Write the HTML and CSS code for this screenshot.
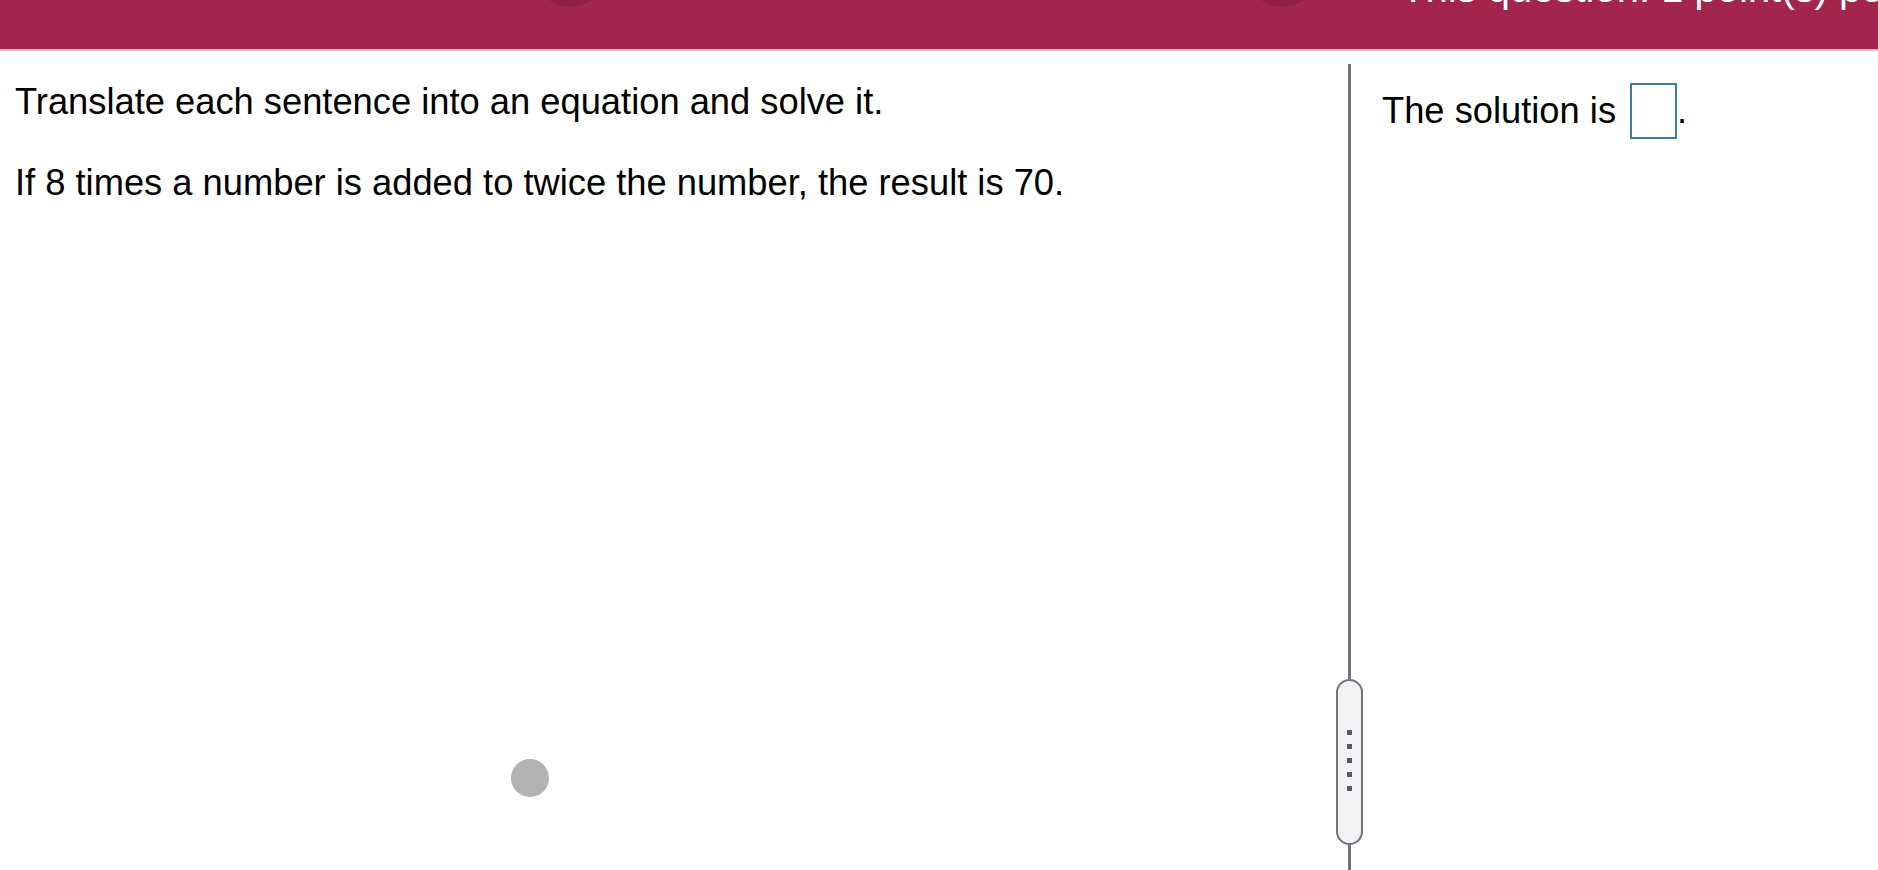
FILE: index.html
```html
<!DOCTYPE html>
<html lang="en">
<head>
  <meta charset="UTF-8">
  <title>Question</title>
  <link rel="stylesheet" href="styles.css">
</head>
<body>

  <div class="header">
    <div class="header-row">
      <span class="nav-dot first"></span>
      <span class="nav-dot second"></span>
      <span class="points">This question: 1 point(s) possible</span>
    </div>
  </div>

  <div class="main">
    <div class="question">
      <p>Translate each sentence into an equation and solve it.</p>
      <p>If 8 times a number is added to twice the number, the result is 70.</p>
      <div class="cursor-dot"></div>
    </div>

    <div class="divider">
      <div class="line top"></div>
      <div class="handle">
        <span></span><span></span><span></span><span></span><span></span>
      </div>
      <div class="line bottom"></div>
    </div>

    <div class="answer">
      <div class="answer-row">
        <span>The solution is</span>
        <span class="answer-box"></span>
        <span>.</span>
      </div>
    </div>
  </div>

</body>
</html>
```

FILE: styles.css
```css
body {
  margin: 0;
  font-family: "Liberation Sans", Arial, sans-serif;
  color: #000;
  background: #fff;
  overflow: hidden;
}

/* Barra de cima */
.header {
  height: 49px;
  background-color: #a3244c;
  border-bottom: 2px solid #cfc5d5;
  overflow: hidden;
}

.header-row {
  display: flex;
  align-items: flex-start;
  white-space: nowrap;
}

.nav-dot {
  flex: none;
  width: 73px;
  height: 73px;
  border-radius: 50%;
  background-color: #8e1f45;
  margin-top: -66px;
}

.nav-dot.first {
  margin-left: 534px;
}

.nav-dot.second {
  margin-left: 639px;
}

.points {
  color: white;
  font-size: 40px;
  line-height: 40px;
  margin-top: -32px;
  margin-left: 82px;
}

.main {
  display: flex;
  height: 819px;
}

.question {
  width: 1320px;
  padding: 30px 0 0 15px;
}

.question p {
  font-size: 36.3px;
  line-height: 42px;
  margin: 0 0 39px 0;
}

.cursor-dot {
  width: 38px;
  height: 38px;
  border-radius: 50%;
  background-color: #b3b3b3;
  margin-top: 555px;
  margin-left: 496px;
}

/* Separador com a alça */
.divider {
  width: 28px;
  display: flex;
  flex-direction: column;
  align-items: center;
  padding-top: 13px;
}

.divider .line {
  width: 3px;
  background-color: #6e737d;
}

.divider .line.top {
  height: 615px;
  flex: none;
}

.divider .line.bottom {
  flex: 1;
}

.handle {
  flex: none;
  box-sizing: border-box;
  width: 27px;
  height: 166px;
  border: 2.5px solid #6e737d;
  border-radius: 14px;
  background-color: #f1f2f4;
  display: flex;
  flex-direction: column;
  align-items: center;
  justify-content: center;
  gap: 9px;
  padding-bottom: 4px;
}

.handle span {
  width: 5px;
  height: 5px;
  background-color: #555a63;
}

.answer {
  flex: 1;
  padding: 32px 0 0 19px;
}

.answer-row {
  display: flex;
  align-items: center;
  font-size: 36.3px;
  line-height: 42px;
}

.answer-box {
  box-sizing: border-box;
  width: 47px;
  height: 56px;
  border: 2.5px solid #3b7f9c;
  margin-left: 14px;
}
```
